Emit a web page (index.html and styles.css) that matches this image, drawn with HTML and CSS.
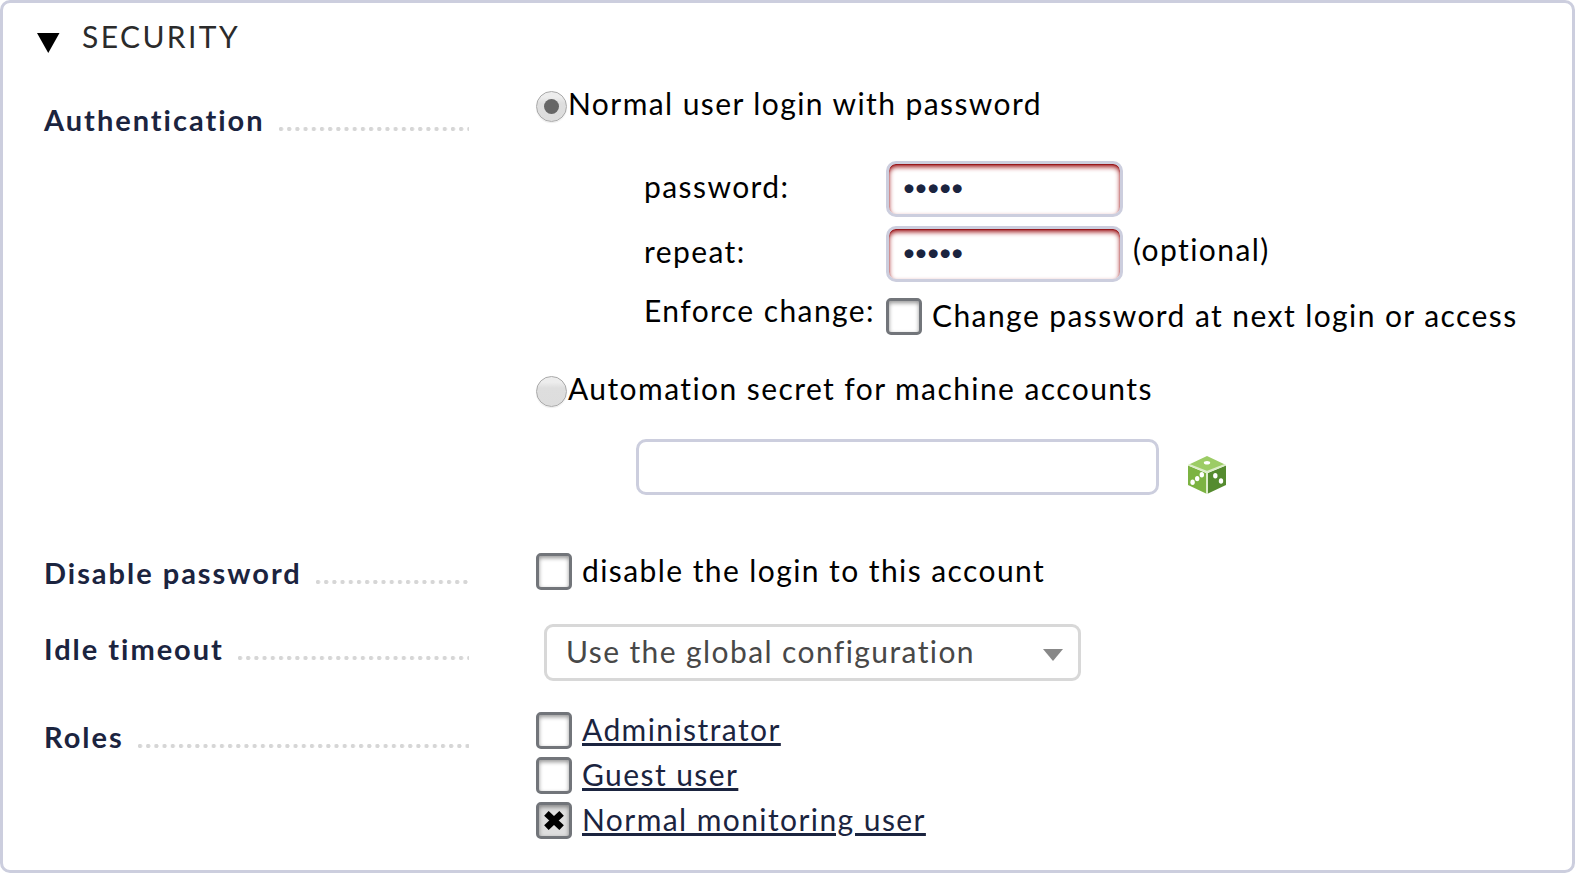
FILE: index.html
```html
<!DOCTYPE html>
<html lang="en">
<head>
<meta charset="utf-8">
<title>Security</title>
<link rel="stylesheet" href="styles.css">
</head>
<body>
<section class="panel">
  <header class="panel-head">
    <svg class="fold" width="23" height="20" viewBox="0 0 23 20"><path d="M0 0H22.5L11.25 20Z" fill="#000"/></svg>
    <h2 class="title">SECURITY</h2>
  </header>

  <div class="row auth">
    <div class="label"><span>Authentication</span><span class="dots"></span></div>
    <div class="content">
      <label class="radio-line"><span class="radio on"></span><span class="radio-text">Normal user login with password</span></label>
      <div class="fields">
        <span class="name pw">password:</span>
        <div class="cell"><input class="box secret" type="password" value="admin"></div>
        <span class="name rep">repeat:</span>
        <div class="cell"><input class="box secret" type="password" value="admin"><span class="optional">(optional)</span></div>
        <span class="name enf">Enforce change:</span>
        <label class="cell change"><span class="check"></span><span class="check-text">Change password at next login or access</span></label>
      </div>
      <label class="radio-line auto"><span class="radio"></span><span class="radio-text">Automation secret for machine accounts</span></label>
      <div class="secret-line">
        <input class="box long" type="text">
        <svg class="dice" width="38" height="38" viewBox="0 0 38 38">
          <path d="M19 0L37 8.5L19 16L1 8.5Z" fill="#9ccc65"/>
          <path d="M0 9.5L18 17V37.5L0 29Z" fill="#7cb342"/>
          <path d="M38 9.5L20 17V37.5L38 29Z" fill="#558b2f"/>
          <path d="M.5 8.6L19 16L37.5 8.6M19 16V38" fill="none" stroke="#dcedc8" stroke-width="1.9"/>
          <g fill="#fff">
            <ellipse cx="19" cy="6.8" rx="3.2" ry="1.8"/>
            <ellipse cx="4.6" cy="26.3" rx="2.2" ry="2.7"/>
            <ellipse cx="9.2" cy="22.6" rx="2.2" ry="2.7"/>
            <ellipse cx="13.8" cy="18.8" rx="2.2" ry="2.7"/>
            <ellipse cx="27.3" cy="19.8" rx="2.2" ry="2.7"/>
            <ellipse cx="33" cy="25" rx="2.2" ry="2.7"/>
          </g>
        </svg>
      </div>
    </div>
  </div>

  <div class="row disable">
    <div class="label"><span>Disable password</span><span class="dots"></span></div>
    <label class="content check-line"><span class="check"></span><span class="check-text">disable the login to this account</span></label>
  </div>

  <div class="row idle">
    <div class="label"><span>Idle timeout</span><span class="dots"></span></div>
    <div class="content">
      <div class="select"><span>Use the global configuration</span><svg width="20" height="12" viewBox="0 0 20 12"><path d="M0 0H20L10 12Z" fill="#888"/></svg></div>
    </div>
  </div>

  <div class="row roles">
    <div class="label"><span>Roles</span><span class="dots"></span></div>
    <div class="content role-list">
      <div class="check-line"><span class="check"></span><a class="check-text" href="#">Administrator</a></div>
      <div class="check-line"><span class="check"></span><a class="check-text" href="#">Guest user</a></div>
      <div class="check-line"><span class="check on"><svg width="22" height="21" viewBox="0 0 22 21"><path d="M3.4 3.4L18.6 17.6M18.6 3.4L3.4 17.6" stroke="#000" stroke-width="6.6"/></svg></span><a class="check-text" href="#">Normal monitoring user</a></div>
    </div>
  </div>
</section>
</body>
</html>
```
FILE: styles.css
```css
* { box-sizing: border-box; }

body {
  margin: 0;
  background: #fff;
  color: #000;
  font: 30px/36px Lato, sans-serif;
  letter-spacing: 1.42px;
}

.panel {
  height: 873px;
  border: 3px solid #cccede;
  border-radius: 10px;
  white-space: nowrap;
}

.panel-head {
  display: flex;
  padding: 15px 0 0 34px;
  height: 82px;
}
.fold { margin-top: 15px; }
.title {
  margin: 0 0 0 22px;
  font-size: 30px;
  font-weight: 400;
  line-height: 36px;
  letter-spacing: 2.4px;
  color: #2b2b2b;
}

.row {
  display: grid;
  grid-template-columns: 425px 1fr;
  column-gap: 67px;
  padding-left: 41px;
  align-items: start;
}
.label {
  display: flex;
  align-items: flex-start;
  color: #1b243f;
  font-size: 29px;
  font-weight: 700;
  line-height: 35px;
  letter-spacing: 1.98px;
}
.dots {
  flex: 1;
  height: 4px;
  margin: 25px 0 0 14px;
  background: radial-gradient(circle at 2px 2px, #d6d6d6 1.8px, transparent 2.5px) 0 0 / 8.2px 4px repeat-x;
}
.auth .label { margin-top: 17px; }
.auth .dots { margin-left: 15px; }

.radio-line { display: flex; height: 37px; }
.radio {
  display: flex;
  align-items: center;
  justify-content: center;
  width: 31px;
  height: 31px;
  margin-top: 6px;
  border: 1px solid #a9a9a9;
  border-radius: 50%;
  background: linear-gradient(#ededed, #ededed 18%, #dedede 38%, #ddd);
  box-shadow: 0 1px 1px rgba(0, 0, 0, .08);
}
.radio.on::after {
  content: "";
  width: 15px;
  height: 15px;
  border-radius: 50%;
  background: #666;
}
.radio-text { margin-left: 1px; }

.fields {
  display: grid;
  grid-template-columns: 242px 1fr;
  row-gap: 9px;
  margin: 39px 0 0 108px;
  align-items: start;
}
.pw, .rep { margin-top: 7px; }
.enf { margin-top: 1px; }
.cell { display: flex; align-items: flex-start; }
.optional { margin: 5px 0 0 10px; }

.box {
  display: block;
  height: 56px;
  margin: 0;
  border: 3px solid #cccede;
  border-radius: 10px;
  background: #fff;
  outline: 0;
}
.secret {
  width: 237px;
  padding: 0 0 6px 13px;
  color: #1b243f;
  font: 24px Lato, sans-serif;
  letter-spacing: -1.85px;
  box-shadow: inset 0 1px 1px #951418, inset 0 3px 5px #a0181c;
}
.long { width: 523px; }

.check {
  display: flex;
  flex: none;
  align-items: center;
  justify-content: center;
  width: 36px;
  height: 37px;
  margin-top: 1px;
  border: 3px solid #72757a;
  border-radius: 5px;
  background: #fff;
  box-shadow: inset 0 2px 4px rgba(0, 0, 0, .42);
}
.check.on { background: #dedede; }
.check-text { margin-left: 10px; }
.check-line { display: flex; align-items: flex-start; }
.change { padding-top: 6px; }

.auto { margin-top: 35px; }
.secret-line {
  display: flex;
  align-items: flex-start;
  margin: 32px 0 0 100px;
}
.dice { margin: 17px 0 0 29px; }

.disable { margin-top: 57px; }
.disable .label { margin-top: 3px; }

.idle { margin-top: 34px; }
.idle .label { margin-top: 7px; }
.select {
  display: flex;
  align-items: center;
  justify-content: space-between;
  width: 537px;
  height: 57px;
  margin-left: 8px;
  padding: 0 15px 4px 19px;
  border: 3px solid #d8d8d8;
  border-radius: 9px;
  color: #484848;
  letter-spacing: 1.4px;
}
.select svg { margin-top: 8px; }

.roles { margin-top: 30px; }
.roles .label { margin-top: 8px; }
.role-list { display: grid; row-gap: 7px; }
.role-list a {
  color: #1b243f;
  text-decoration: underline;
  text-decoration-thickness: 3px;
  text-underline-offset: 2px;
}
```
